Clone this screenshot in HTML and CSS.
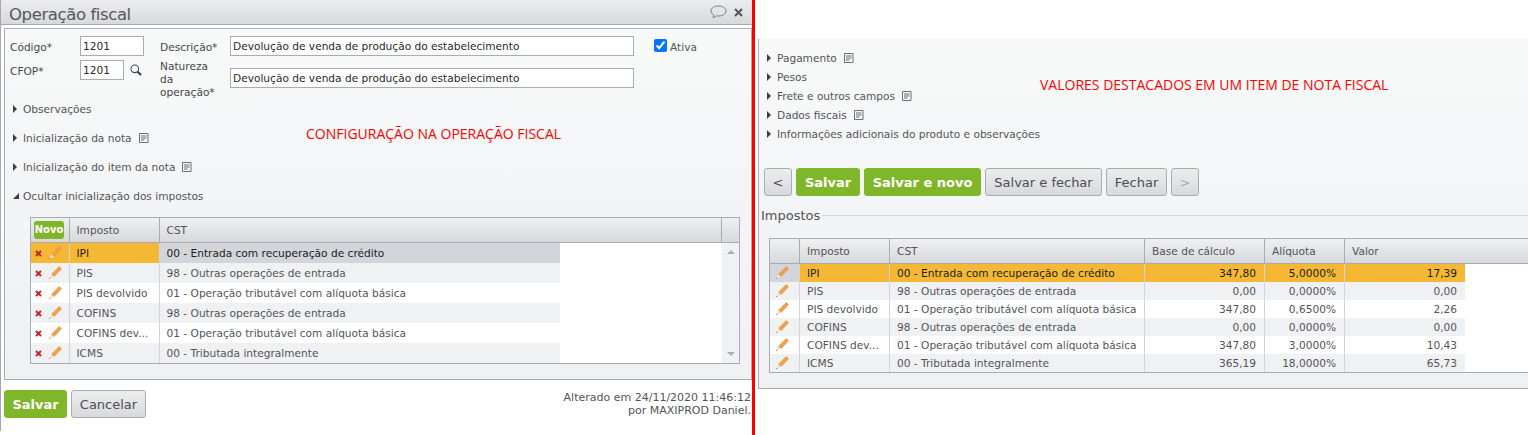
FILE: index.html
```html
<!DOCTYPE html>
<html lang="pt-BR">
<head>
    <meta charset="UTF-8">
    <title>Operação fiscal</title>
    <link rel="stylesheet" href="styles.css">
</head>
<body>
    <svg class="icon-defs" width="0" height="0">
        <defs>
            <symbol id="pencil" viewBox="0 0 14 14">
                <path d="M3.500 8.300 10.600 1.100c.5-.5 1-.5 1.400-.1l1 1c.4.400.4.900-.1 1.400L6 10.700z" fill="#f0a04b" stroke="#e38c38" stroke-width=".5"/>
                <path d="M3.500 8.300 1 13l5-2.300z" fill="#f5dfc4"/>
                <path d="M1.700 11.700 1 13l1.400-.6z" fill="#555"/>
            </symbol>
            <symbol id="del" viewBox="0 0 7 7">
                <path d="M1 1 6 6M6 1 1 6" stroke="#c1272d" stroke-width="2" fill="none"/>
            </symbol>
            <symbol id="doc" viewBox="0 0 10 10">
                <path d="M.5.5h8.500v9H.5z" fill="none" stroke="#6b6f73"/>
                <path d="M2 3h5.500M2 5h5.500M2 7h3.500" stroke="#6b6f73" fill="none"/>
            </symbol>
        </defs>
    </svg>

    <div class="page">
        <section class="dialog">
            <header class="dialog-head">
                <h1 class="dialog-title">Operação fiscal</h1>
                <div class="dialog-tools">
                    <svg class="tool-chat" width="17" height="14" viewBox="0 0 17 14">
                        <path d="M8.500 1C4.400 1 1 3 1 6c0 1.700 1.100 3.100 2.800 4L3 13l3.600-2.200c.6.100 1.300.2 1.900.2 4.100 0 7.500-2.200 7.500-5S12.600 1 8.500 1z" fill="none" stroke="#7d8388"/>
                    </svg>
                    <svg class="tool-close" width="9" height="9" viewBox="0 0 9 9">
                        <path d="M1 1 8 8M8 1 1 8" stroke="#53575b" stroke-width="2" fill="none"/>
                    </svg>
                </div>
            </header>

            <div class="panel dialog-panel">
                <div class="form">
                    <div class="form-col-code">
                        <div class="field-row">
                            <label class="form-label label-code">Código*</label>
                            <input class="form-input input-code" type="text" value="1201">
                        </div>
                        <div class="field-row">
                            <label class="form-label label-code">CFOP*</label>
                            <input class="form-input input-cfop" type="text" value="1201">
                            <svg class="search-icon" width="12" height="12" viewBox="0 0 12 12">
                                <circle cx="4.800" cy="4.800" r="3.800" fill="none" stroke="#44484c" stroke-width="1.100"/>
                                <path d="M7.600 7.600 11 11" stroke="#33373a" stroke-width="2"/>
                            </svg>
                        </div>
                    </div>
                    <div class="form-col-desc">
                        <div class="field-row">
                            <label class="form-label label-desc">Descrição*</label>
                            <input class="form-input input-desc" type="text" value="Devolução de venda de produção do estabelecimento">
                        </div>
                        <div class="field-row field-row-tall">
                            <label class="form-label label-desc">Natureza da operação*</label>
                            <input class="form-input input-desc" type="text" value="Devolução de venda de produção do estabelecimento">
                        </div>
                    </div>
                    <label class="active-check"><input type="checkbox" checked>Ativa</label>
                </div>

                <ul class="sections sections-wide">
                    <li class="section-item"><i class="arrow"></i>Observações</li>
                    <li class="section-item"><i class="arrow"></i>Inicialização da nota<svg class="doc-icon"><use href="#doc"/></svg></li>
                    <li class="section-item"><i class="arrow"></i>Inicialização do item da nota<svg class="doc-icon"><use href="#doc"/></svg></li>
                    <li class="section-item"><i class="arrow arrow-open"></i>Ocultar inicialização dos impostos</li>
                </ul>

                <div class="grid grid-left">
                    <div class="grid-head">
                        <div class="th th-novo"><span class="btn-novo">Novo</span></div>
                        <div class="th">Imposto</div>
                        <div class="th th-fill">CST</div>
                        <div class="th th-gutter"></div>
                    </div>
                    <div class="grid-main">
                        <div class="grid-rows">
                            <div class="row row-selected">
                                <div class="td td-actions"><svg class="del-icon"><use href="#del"/></svg><svg class="edit-icon"><use href="#pencil"/></svg></div>
                                <div class="td">IPI</div>
                                <div class="td td-focus">00 - Entrada com recuperação de crédito</div>
                            </div>
                            <div class="row">
                                <div class="td td-actions"><svg class="del-icon"><use href="#del"/></svg><svg class="edit-icon"><use href="#pencil"/></svg></div>
                                <div class="td">PIS</div>
                                <div class="td">98 - Outras operações de entrada</div>
                            </div>
                            <div class="row">
                                <div class="td td-actions"><svg class="del-icon"><use href="#del"/></svg><svg class="edit-icon"><use href="#pencil"/></svg></div>
                                <div class="td">PIS devolvido</div>
                                <div class="td">01 - Operação tributável com alíquota básica</div>
                            </div>
                            <div class="row">
                                <div class="td td-actions"><svg class="del-icon"><use href="#del"/></svg><svg class="edit-icon"><use href="#pencil"/></svg></div>
                                <div class="td">COFINS</div>
                                <div class="td">98 - Outras operações de entrada</div>
                            </div>
                            <div class="row">
                                <div class="td td-actions"><svg class="del-icon"><use href="#del"/></svg><svg class="edit-icon"><use href="#pencil"/></svg></div>
                                <div class="td">COFINS dev...</div>
                                <div class="td">01 - Operação tributável com alíquota básica</div>
                            </div>
                            <div class="row">
                                <div class="td td-actions"><svg class="del-icon"><use href="#del"/></svg><svg class="edit-icon"><use href="#pencil"/></svg></div>
                                <div class="td">ICMS</div>
                                <div class="td">00 - Tributada integralmente</div>
                            </div>
                        </div>
                        <div class="scrollbar"><i class="scroll-up"></i><i class="scroll-down"></i></div>
                    </div>
                </div>

                <p class="note note-left">CONFIGURAÇÃO NA OPERAÇÃO FISCAL</p>
            </div>

            <footer class="dialog-foot">
                <button class="btn btn-green btn-salvar">Salvar</button>
                <button class="btn btn-cancel">Cancelar</button>
                <div class="changed-by">Alterado em 24/11/2020 11:46:12<br>por MAXIPROD Daniel.</div>
            </footer>
        </section>

        <div class="divider"></div>

        <section class="item-side">
            <div class="panel item-panel">
                <ul class="sections">
                    <li class="section-item"><i class="arrow"></i>Pagamento<svg class="doc-icon"><use href="#doc"/></svg></li>
                    <li class="section-item"><i class="arrow"></i>Pesos</li>
                    <li class="section-item"><i class="arrow"></i>Frete e outros campos<svg class="doc-icon"><use href="#doc"/></svg></li>
                    <li class="section-item"><i class="arrow"></i>Dados fiscais<svg class="doc-icon"><use href="#doc"/></svg></li>
                    <li class="section-item"><i class="arrow"></i>Informações adicionais do produto e observações</li>
                </ul>

                <div class="toolbar">
                    <button class="btn btn-nav">&lt;</button>
                    <button class="btn btn-green btn-salvar2">Salvar</button>
                    <button class="btn btn-green btn-novo2">Salvar e novo</button>
                    <button class="btn btn-fechar">Salvar e fechar</button>
                    <button class="btn btn-close">Fechar</button>
                    <button class="btn btn-nav btn-disabled">&gt;</button>
                </div>

                <div class="legend">Impostos</div>

                <div class="grid grid-right">
                    <div class="grid-head">
                        <div class="th"></div>
                        <div class="th">Imposto</div>
                        <div class="th">CST</div>
                        <div class="th">Base de cálculo</div>
                        <div class="th">Alíquota</div>
                        <div class="th th-fill">Valor</div>
                    </div>
                    <div class="grid-rows">
                        <div class="row row-selected">
                            <div class="td td-actions td-focus"><svg class="edit-icon"><use href="#pencil"/></svg></div>
                            <div class="td">IPI</div>
                            <div class="td">00 - Entrada com recuperação de crédito</div>
                            <div class="td td-num">347,80</div>
                            <div class="td td-num">5,0000%</div>
                            <div class="td td-num">17,39</div>
                        </div>
                        <div class="row">
                            <div class="td td-actions"><svg class="edit-icon"><use href="#pencil"/></svg></div>
                            <div class="td">PIS</div>
                            <div class="td">98 - Outras operações de entrada</div>
                            <div class="td td-num">0,00</div>
                            <div class="td td-num">0,0000%</div>
                            <div class="td td-num">0,00</div>
                        </div>
                        <div class="row">
                            <div class="td td-actions"><svg class="edit-icon"><use href="#pencil"/></svg></div>
                            <div class="td">PIS devolvido</div>
                            <div class="td">01 - Operação tributável com alíquota básica</div>
                            <div class="td td-num">347,80</div>
                            <div class="td td-num">0,6500%</div>
                            <div class="td td-num">2,26</div>
                        </div>
                        <div class="row">
                            <div class="td td-actions"><svg class="edit-icon"><use href="#pencil"/></svg></div>
                            <div class="td">COFINS</div>
                            <div class="td">98 - Outras operações de entrada</div>
                            <div class="td td-num">0,00</div>
                            <div class="td td-num">0,0000%</div>
                            <div class="td td-num">0,00</div>
                        </div>
                        <div class="row">
                            <div class="td td-actions"><svg class="edit-icon"><use href="#pencil"/></svg></div>
                            <div class="td">COFINS dev...</div>
                            <div class="td">01 - Operação tributável com alíquota básica</div>
                            <div class="td td-num">347,80</div>
                            <div class="td td-num">3,0000%</div>
                            <div class="td td-num">10,43</div>
                        </div>
                        <div class="row">
                            <div class="td td-actions"><svg class="edit-icon"><use href="#pencil"/></svg></div>
                            <div class="td">ICMS</div>
                            <div class="td">00 - Tributada integralmente</div>
                            <div class="td td-num">365,19</div>
                            <div class="td td-num">18,0000%</div>
                            <div class="td td-num">65,73</div>
                        </div>
                    </div>
                </div>

                <p class="note note-right">VALORES DESTACADOS EM UM ITEM DE NOTA FISCAL</p>
            </div>
        </section>
    </div>
</body>
</html>
```

FILE: styles.css
```css
* {
    margin: 0;
    padding: 0;
    box-sizing: border-box;
}
html, body {
    height: 100%;
    overflow: hidden;
}
body {
    background: #fff;
    color: #525558;
    font-family: "DejaVu Sans", "Liberation Sans", sans-serif;
    font-size: 10.6px;
}
.icon-defs {
    position: absolute;
}
.page {
    display: flex;
    height: 435px;
}

/* dialogo da esquerda */
.dialog {
    width: 752px;
    height: 431px;
    flex: none;
    border-left: 1px solid #a4a9ae;
}
.dialog-head {
    display: flex;
    align-items: center;
    justify-content: space-between;
    height: 25px;
    padding: 0 9px 0 8px;
    background: linear-gradient(#eceded, #d7d9dc);
    border-bottom: 1px solid #a4a9ae;
}
.dialog-title {
    margin-top: 4px;
    font-size: 16.5px;
    font-weight: normal;
    letter-spacing: -0.4px;
    color: #55585c;
}
.dialog-tools {
    display: flex;
    align-items: center;
    gap: 7px;
}
.panel {
    position: relative;
    background: linear-gradient(#f8f9f9, #eff0f2);
    border: 1px solid #a9adb1;
}
.dialog-panel {
    height: 352px;
    margin: 3px 0 0 3px;
}

.form {
    display: flex;
    padding: 7px 0 0 5px;
    height: 65px;
}
.form-col-code {
    width: 150px;
}
.form-col-desc {
    width: 494px;
}
.field-row {
    display: flex;
    align-items: center;
    height: 20px;
    margin-bottom: 4px;
}
.field-row-tall {
    align-items: flex-start;
}
.field-row-tall .form-input {
    margin-top: 8px;
}
.field-row-tall .form-label {
    padding-top: 0;
}
.form-label {
    padding-top: 2px;
    color: #44474a;
}
.label-code {
    width: 70px;
}
.label-desc {
    width: 60px;
    margin-right: 10px;
    line-height: 13px;
}
.form-input {
    height: 20px;
    padding: 0 2px;
    border: 1px solid #a9adb1;
    background: #fff;
    color: #2a2a2a;
    font: inherit;
    outline: none;
}
.input-code {
    width: 64px;
}
.input-cfop {
    width: 44px;
}
.input-desc {
    width: 404px;
}
.search-icon {
    margin-left: 6px;
}
.active-check {
    display: flex;
    align-items: flex-start;
    gap: 3px;
    height: 20px;
    padding-top: 3px;
    line-height: 17px;
}
.active-check input {
    width: 13px;
    height: 13px;
    margin: 0;
}

.sections {
    list-style: none;
    padding: 9px 0 0 8px;
}
.section-item {
    display: flex;
    align-items: center;
    height: 19px;
}
.sections-wide {
    padding-top: 0;
}
.sections-wide .section-item {
    height: 29px;
}
.arrow {
    width: 0;
    height: 0;
    margin-right: 6px;
    border-style: solid;
    border-width: 4px 0 4px 4px;
    border-color: transparent transparent transparent #3c3f42;
}
.arrow-open {
    width: 6px;
    height: 6px;
    margin-right: 4px;
    border-width: 0 0 6px 6px;
    border-color: transparent transparent #3c3f42 transparent;
}
.doc-icon {
    width: 10px;
    height: 10px;
    margin-left: 7px;
}

/* grades */
.grid {
    border: 1px solid #a9adb1;
    background: #fff;
}
.grid-left {
    width: 710px;
    margin: 7px 0 0 25px;
}
.grid-right {
    margin: 15px 0 0 10px;
    border-right: none;
}
.grid-head {
    display: grid;
    background: linear-gradient(#eff0f1, #d6d8db);
    border-bottom: 1px solid #a9adb1;
}
.grid-left .grid-head {
    height: 25px;
    grid-template-columns: 39px 90px 1fr 17px;
}
.grid-right .grid-head {
    height: 25px;
    grid-template-columns: 30px 90px 255px 120px 80px 1fr;
}
.th {
    display: flex;
    align-items: center;
    padding-left: 7px;
    border-right: 1px solid #a9adb1;
}
.grid-left .th {
    padding-left: 6.5px;
}
.grid-left .th-novo {
    padding-left: 3px;
}
.th-gutter {
    border-right: none;
}
.grid-right .th-fill {
    border-right: none;
}
.btn-novo {
    width: 30px;
    height: 18px;
    line-height: 17px;
    text-align: center;
    color: #fff;
    font-size: 10px;
    font-weight: bold;
    background: #7fb62a;
    border-radius: 3px;
}
.grid-main {
    display: flex;
    justify-content: space-between;
    height: 120px;
}
.grid-rows {
    display: flex;
    flex-direction: column;
}
.grid-right .grid-rows {
    width: 695px;
}
.row {
    display: grid;
    align-items: stretch;
}
.grid-left .row {
    grid-template-columns: 39px 90px 400px;
    height: 20px;
}
.grid-right .row {
    grid-template-columns: 30px 90px 255px 120px 80px 120px;
    height: 18px;
}
.row:nth-child(even) {
    background: #f0f1f3;
}
.td {
    display: flex;
    align-items: center;
    padding: 0 7px;
    white-space: nowrap;
    border-right: 1px solid #d2d5d9;
}
.grid-left .td {
    padding: 0 6.5px;
}
.td:last-child {
    border-right: none;
}
.td-num {
    justify-content: flex-end;
    padding-right: 8px;
}
.grid-left .td-actions {
    gap: 6px;
    padding: 0 0 0 4px;
}
.grid-right .td-actions {
    padding: 0 0 0 5px;
}
.row-selected {
    background: #f5b835;
    color: #1c1c1c;
}
.row-selected .td-focus {
    background: #d2d5d9;
}
.del-icon {
    width: 7px;
    height: 7px;
}
.edit-icon {
    width: 14px;
    height: 14px;
}
.scrollbar {
    display: flex;
    flex-direction: column;
    justify-content: space-between;
    align-items: center;
    width: 17px;
    padding: 7px 0;
    background: #f0f1f3;
}
.scroll-up, .scroll-down {
    width: 0;
    height: 0;
    border-style: solid;
    border-color: transparent;
}
.scroll-up {
    border-width: 0 4px 4px 4px;
    border-bottom-color: #a9adb1;
}
.scroll-down {
    border-width: 4px 4px 0 4px;
    border-top-color: #a9adb1;
}

/* botoes */
.btn {
    height: 28px;
    border: 1px solid #a9adb1;
    border-radius: 3px;
    background: linear-gradient(#eceded, #d7d9dc);
    color: #4c4f52;
    font: inherit;
    font-size: 13px;
}
.btn-green {
    border-color: #7fb62a;
    background: #7fb62a;
    color: #fff;
    font-weight: bold;
}
.btn-salvar {
    width: 63px;
}
.btn-cancel {
    width: 75px;
}
.dialog-foot {
    display: flex;
    align-items: flex-start;
    gap: 4px;
    padding: 10px 1px 0 3px;
}
.changed-by {
    flex: 1;
    margin-top: 1px;
    text-align: right;
    font-size: 11px;
    line-height: 13px;
}

/* lado direito */
.item-side {
    flex: 1;
    padding-left: 3px;
    min-width: 0;
}
.item-panel {
    height: 350px;
    margin-top: 39px;
    border-top: none;
    border-right: none;
    overflow: hidden;
}
.toolbar {
    display: flex;
    gap: 4px;
    margin: 25px 0 0 5px;
}
.btn-nav {
    width: 28px;
    font-size: 13px;
}
.btn-disabled {
    color: #a9adb1;
}
.btn-salvar2 {
    width: 64px;
}
.btn-novo2 {
    width: 117px;
}
.btn-fechar {
    width: 117px;
}
.btn-close {
    width: 61px;
}
.legend {
    display: flex;
    align-items: center;
    gap: 2px;
    height: 16px;
    margin: 11px 0 0 2px;
    font-size: 13px;
}
.legend::after {
    content: "";
    flex: 1;
    height: 1px;
    background: #d2d5d9;
}

/* anotacoes em vermelho */
.note {
    position: absolute;
    color: #f00;
    font-family: "Open Sans", sans-serif;
    font-size: 14px;
    white-space: nowrap;
}
.note-left {
    left: 301px;
    top: 95px;
}
.note-right {
    left: 281px;
    top: 36px;
}

.divider {
    width: 3px;
    flex: none;
    background: #f00;
}
```
